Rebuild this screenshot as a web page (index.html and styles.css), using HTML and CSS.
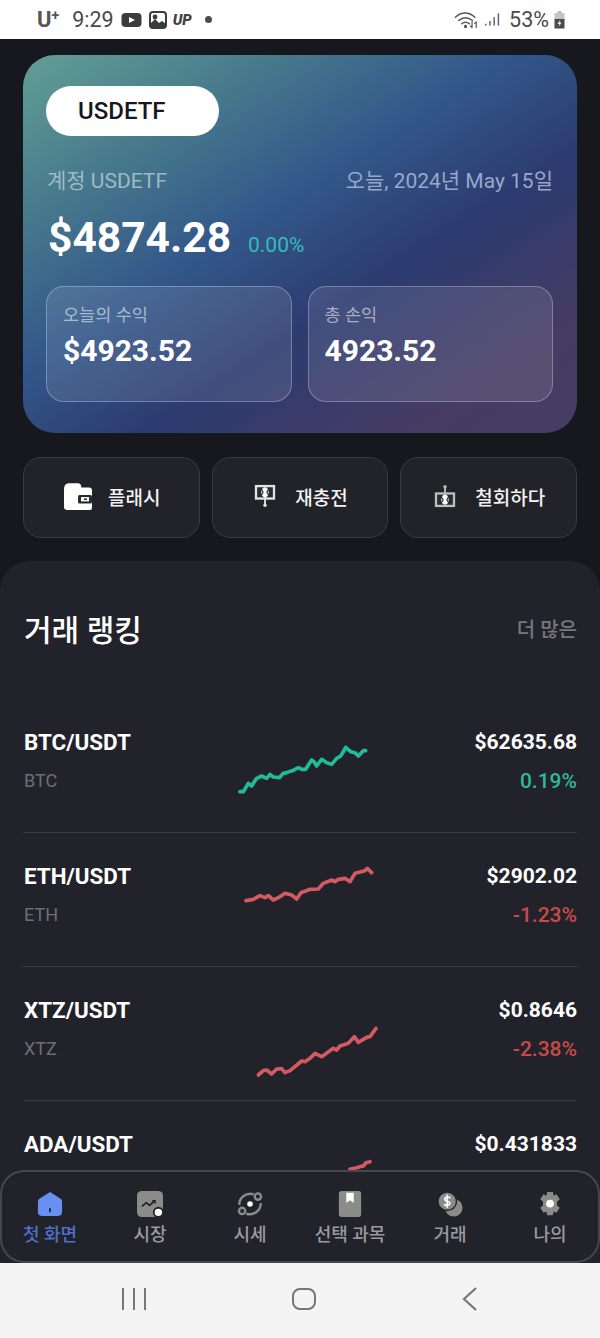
FILE: index.html
```html
<!DOCTYPE html>
<html lang="ko">
<head>
<meta charset="utf-8">
<title>USDETF</title>
<link rel="stylesheet" href="styles.css">
</head>
<body>
<div class="phone">
  <header class="status">
    <div class="status-left">
      <span class="carrier">U<sup>+</sup></span>
      <span class="clock">9:29</span>
      <svg class="si-yt" width="21" height="16" viewBox="0 0 21 16"><rect x="0.5" y="1" width="20" height="14" rx="4" fill="#3c3c3c"/><path d="M8 5l6 3-6 3z" fill="#fff"/></svg>
      <svg class="si-img" width="18" height="18" viewBox="0 0 18 18"><rect x="1" y="1" width="16" height="16" rx="3" fill="#fff" stroke="#3c3c3c" stroke-width="2"/><path d="M1 13l5-5 4 4 3-2 4 3v2a2 2 0 0 1-2 2H3a2 2 0 0 1-2-2z" fill="#3c3c3c"/><circle cx="6" cy="6" r="2.4" fill="#3c3c3c"/></svg>
      <span class="up">UP</span>
      <span class="dot"></span>
    </div>
    <div class="status-right">
      <svg class="si-wifi" width="25" height="20" viewBox="0 0 27 20" fill="none" stroke="#555" stroke-width="1.6" stroke-linecap="round"><path d="M1.500 7C8 1 16 1 22.500 7"/><path d="M5 10.500c5-4 10-4 15 0"/><path d="M8.500 14c3-2.200 5-2.200 8 0"/><circle cx="12.500" cy="17" r="1" fill="#555"/><path d="M19.500 12v6M17.800 16.500l1.700 1.700M24 18v-6M22.300 13.700l1.700-1.700" stroke-width="1.300"/></svg>
      <svg class="si-sig" width="15" height="14" viewBox="0 0 16 14" fill="#666"><rect x="0" y="11" width="1.600" height="2"/><rect x="4.500" y="8" width="1.600" height="5"/><rect x="9" y="4" width="1.600" height="9"/><rect x="13.500" y="0" width="1.600" height="13"/></svg>
      <span class="pct">53%</span>
      <svg width="13" height="18" viewBox="0 0 11 18"><rect x="3.500" y="0" width="4" height="2" fill="#bbb"/><rect x="0.500" y="2" width="10" height="7" fill="#c4c4c4"/><rect x="0.500" y="8" width="10" height="9.500" fill="#4a4a4a"/><path d="M6.500 8.500L3.500 13h2l-1 3 3-4.500h-2z" fill="#fff"/></svg>
    </div>
  </header>

  <main class="scroll">
    <section class="hero">
      <div class="pill">USDETF</div>
      <div class="hero-meta"><span>계정 USDETF</span><span class="hero-date">오늘, 2024년 May 15일</span></div>
      <div class="balance"><span class="amount">$4874.28</span><span class="change">0.00%</span></div>
      <div class="stats">
        <div class="stat"><div class="stat-label">오늘의 수익</div><div class="stat-value">$4923.52</div></div>
        <div class="stat"><div class="stat-label">총 손익</div><div class="stat-value">4923.52</div></div>
      </div>
    </section>

    <nav class="actions">
      <a class="action">
        <svg class="wallet" width="28" height="30" viewBox="0 0 28 28" preserveAspectRatio="none"><path d="M0 8q0-6 5-6h9q3 0 3.500 4H25q3 0 3 3V25q0 2-2 2H3q-3 0-3-3z" fill="#fff"/><rect x="14" y="13" width="14" height="8" rx="1.500" fill="#2a2b31"/><rect x="17" y="15" width="8" height="4" fill="#fff"/><rect x="20" y="16.300" width="3" height="1.400" fill="#2a2b31"/></svg>
        <span>플래시</span>
      </a>
      <a class="action wide">
        <svg width="22" height="24" viewBox="0 0 22 26"><rect x="0" y="1" width="22" height="16" fill="#e4e4e4"/><rect x="2.500" y="3.500" width="17" height="11" fill="#2a2b31"/><ellipse cx="11" cy="9" rx="4" ry="5.500" fill="#fff"/><path d="M7 5.500l2 3.500-2 3.500M15 5.500l-2 3.500 2 3.500" fill="none" stroke="#2a2b31" stroke-width="1.200"/><path d="M11 14v8" stroke="#e4e4e4" stroke-width="2"/><circle cx="11" cy="23" r="1.800" fill="#e4e4e4"/></svg>
        <span>재충전</span>
      </a>
      <a class="action wide">
        <svg width="22" height="24" viewBox="0 0 22 26"><rect x="0" y="9" width="22" height="16" fill="#bdbdbd"/><rect x="2.500" y="11.500" width="17" height="11" fill="#2a2b31"/><ellipse cx="11" cy="17" rx="4" ry="5.500" fill="#fff"/><path d="M7 13.500l2 3.500-2 3.500M15 13.500l-2 3.500 2 3.500" fill="none" stroke="#2a2b31" stroke-width="1.200"/><path d="M11 3v7" stroke="#bdbdbd" stroke-width="2"/><circle cx="11" cy="3" r="1.800" fill="#bdbdbd"/></svg>
        <span>철회하다</span>
      </a>
    </nav>

    <section class="panel">
      <div class="panel-head"><h2>거래 랭킹</h2><span class="more">더 많은</span></div>

      <div class="row">
        <div class="pair"><div class="sym">BTC/USDT</div><div class="coin">BTC</div></div>
        <svg class="spark up-line" viewBox="0 -93 510 402"><polyline points="60,185 70,185 78,172 85,160 95,168 103,155 110,145 125,138 140,145 150,133 160,141 178,143 190,130 200,128 210,124 218,122 225,118 235,113 245,118 257,118 265,105 275,90 282,95 290,108 305,88 320,98 335,103 350,85 362,78 370,65 377,52 392,65 405,68 415,78 430,62 437,62"/></svg>
        <div class="quote"><div class="price">$62635.68</div><div class="delta pos">0.19%</div></div>
      </div>
      <div class="row">
        <div class="pair"><div class="sym">ETH/USDT</div><div class="coin">ETH</div></div>
        <svg class="spark down-line" viewBox="0 309 510 402"><polyline points="78,512 100,508 120,497 135,503 145,497 160,510 175,503 195,490 215,495 230,507 243,488 270,478 295,477 310,460 335,450 345,455 355,448 375,445 390,455 405,430 435,422 442,415 455,428"/></svg>
        <div class="quote"><div class="price">$2902.02</div><div class="delta neg">-1.23%</div></div>
      </div>
      <div class="row">
        <div class="pair"><div class="sym">XTZ/USDT</div><div class="coin">XTZ</div></div>
        <svg class="spark down-line" viewBox="0 -99 510 402"><polyline points="115,225 130,212 140,210 155,222 170,207 185,206 195,218 210,212 245,183 255,185 270,175 285,160 305,170 340,145 350,150 360,138 385,130 403,110 415,127 440,112 450,110 468,85"/></svg>
        <div class="quote"><div class="price">$0.8646</div><div class="delta neg">-2.38%</div></div>
      </div>
      <div class="row">
        <div class="pair"><div class="sym">ADA/USDT</div></div>
        <svg class="spark down-line" viewBox="0 303 510 402"><polyline points="390,508 410,503 420,500 430,498 438,488 450,485"/></svg>
        <div class="quote"><div class="price">$0.431833</div></div>
      </div>
    </section>
  </main>

  <footer class="tabwrap">
    <div class="tabbar">
      <a class="tab active">
        <svg width="26" height="26" viewBox="0 0 28 28"><path d="M14 1L25 8q2 1 2 3.500V22q0 5-5 5H6q-5 0-5-5V11.500Q1 9 3 8z" fill="#6a8ff2"/><rect x="13" y="18" width="2" height="5" rx="1" fill="#1e2a4c"/></svg>
        <span>첫 화면</span>
      </a>
      <a class="tab">
        <svg width="26" height="26" viewBox="0 0 28 28"><rect x="0" y="0" width="28" height="28" rx="5" fill="#8b8b87"/><path d="M6 16l4-3.500 3.500 3 5-4.500" fill="none" stroke="#23242a" stroke-width="2" stroke-linecap="round" stroke-linejoin="round"/><path d="M16.500 10.500h3v3" fill="none" stroke="#23242a" stroke-width="1.500"/><circle cx="23" cy="23" r="5" fill="#fff" stroke="#23242a" stroke-width="2"/></svg>
        <span>시장</span>
      </a>
      <a class="tab">
        <svg width="26" height="26" viewBox="0 0 28 28" fill="none" stroke="#8b8b87" stroke-width="2.600"><path d="M18 3.500C10 1 2 7 2.500 15M10 24.500C18 27 26 21 25.500 13"/><circle cx="22.500" cy="6" r="3.400"/><circle cx="5.500" cy="21.500" r="3.400"/><circle cx="14" cy="14" r="3" fill="#fff" stroke="none"/></svg>
        <span>시세</span>
      </a>
      <a class="tab">
        <svg width="26" height="26" viewBox="0 0 28 28"><rect x="2" y="0" width="24" height="28" rx="3" fill="#8b8b87"/><path d="M10 2h8v11l-4-3-4 3z" fill="#fff"/></svg>
        <span>선택 과목</span>
      </a>
      <a class="tab">
        <svg width="26" height="26" viewBox="0 0 28 28"><circle cx="18" cy="18" r="9.500" fill="#8b8b87"/><circle cx="11" cy="11" r="10" fill="#8b8b87" stroke="#23242a" stroke-width="1.500"/><path d="M14.500 7.500q-3.500-2-5.800 0-1.500 2.500 2.300 3.500 4 1 2.500 3.500-2.500 2-6 0M11 4v14" fill="none" stroke="#fff" stroke-width="1.700"/></svg>
        <span>거래</span>
      </a>
      <a class="tab">
        <svg width="26" height="26" viewBox="0 0 28 28"><path d="M11 1h6l1 4 3-1.500 3.500 5.500-3 2.500v4l3 2.500-3.500 5.500-3-1.500-1 4h-6l-1-4-3 1.500L3.500 18l3-2.500v-4L3.500 9 7 3.500 10 5z" fill="#8b8b87"/><circle cx="14" cy="13.500" r="4.200" fill="#fff"/></svg>
        <span>나의</span>
      </a>
    </div>
  </footer>

  <div class="sysnav">
    <svg width="26" height="24" viewBox="0 0 26 24" fill="#77777a"><rect x="1" y="1" width="2" height="22"/><rect x="12" y="1" width="2" height="22"/><rect x="23" y="1" width="2" height="22"/></svg>
    <svg width="24" height="24" viewBox="0 0 24 24" fill="none" stroke="#77777a" stroke-width="2"><rect x="1" y="2" width="22" height="20" rx="7"/></svg>
    <svg width="18" height="26" viewBox="0 0 18 26" fill="none" stroke="#77777a" stroke-width="2.200"><path d="M15 2L3 13l12 11"/></svg>
  </div>
</div>
</body>
</html>
```
FILE: styles.css
```css
* { box-sizing: border-box; }
html, body { margin: 0; padding: 0; }
body { font-family: Roboto, "Noto Sans CJK KR", sans-serif; background: #17181d; color: #fff; }
.phone { width: 600px; height: 1338px; display: flex; flex-direction: column; overflow: hidden; background: #17181d; }

.status { height: 39px; flex: none; background: #fff; color: #4a4a4a; display: flex; justify-content: space-between; align-items: center; padding: 0 34px 0 37px; font-size: 21.500px; }
.status-left, .status-right { display: flex; align-items: center; }
.carrier { font-weight: 700; font-size: 22px; margin-right: 13px; color: #555; }
.carrier sup { font-size: 14px; line-height: 0; vertical-align: 7px; }
.clock { margin-right: 7px; }
.si-yt { margin-right: 7px; }
.si-img { margin-right: 6px; }
.up { font-weight: 900; font-style: italic; font-size: 15px; color: #444; }
.dot { width: 7px; height: 7px; border-radius: 50%; background: #4a4a4a; margin-left: 13px; }
.si-wifi { margin-right: 6px; }
.pct { margin: 0 4px 0 9px; }

.scroll { flex: none; height: 1131px; overflow: hidden; padding-top: 16px; }

.hero { margin: 0 23px; height: 378px; border-radius: 32px; padding: 31px 24px 0 23px; background: linear-gradient(147deg, #629f95 0%, #477a8c 22%, #33588a 42%, #2c3b70 62%, #463c64 85%, #483c62 100%); }
.pill { width: 173px; height: 50px; border-radius: 25px; background: #fff; color: #17181d; font-size: 24px; font-weight: 500; line-height: 50px; padding-left: 32px; }
.hero-meta { display: flex; justify-content: space-between; margin-top: 31px; padding-left: 1px; font-size: 21px; line-height: 28px; color: #9fb9c4; }
.hero-date { color: #98a8c6; }
.balance { display: flex; align-items: baseline; gap: 17px; margin-top: 17px; padding-left: 2px; }
.amount { font-size: 42.500px; font-weight: 700; line-height: 52px; }
.change { font-size: 21px; color: #36bcb4; }
.stats { display: flex; gap: 16px; margin-top: 22px; }
.stat { flex: 1; height: 116px; border: 1px solid rgba(255,255,255,.28); border-radius: 18px; background: rgba(255,255,255,.1); padding: 17px 16px 0 16px; }
.stat-label { font-size: 17.500px; line-height: 22px; color: rgba(255,255,255,.55); }
.stat-value { font-size: 30px; font-weight: 700; line-height: 36px; margin-top: 7px; }

.actions { display: flex; gap: 12px; margin: 24px 23px 0 23px; }
.action { flex: 1; height: 81px; border: 1px solid #3a3b41; border-radius: 18px; background: #222329; display: flex; align-items: center; justify-content: center; gap: 16px; padding: 0 0 3px 2px; font-size: 19px; font-weight: 500; color: #f2f2f2; }
.action.wide { gap: 19px; }

.panel { margin-top: 23px; min-height: 600px; background: #22232a; border-radius: 30px 30px 0 0; padding: 0 23px; }
.panel-head { display: flex; justify-content: space-between; align-items: center; height: 138px; padding: 0 0 4px 1px; }
.panel-head h2 { margin: 0; font-size: 30px; font-weight: 500; color: #fff; }
.more { font-size: 20px; font-weight: 500; color: #77787e; }

.row { display: grid; grid-template-columns: 197px 170px 1fr; height: 134px; border-bottom: 1px solid #3a3b40; }
.pair, .quote { padding-top: 26px; }
.pair { padding-left: 1px; }
.quote { text-align: right; }
.sym { font-size: 22.400px; font-weight: 700; line-height: 34px; color: #fff; }
.price { font-size: 21px; font-weight: 700; line-height: 34px; color: #fff; }
.coin, .delta { margin-top: 5px; line-height: 34px; }
.coin { font-size: 18px; color: #6d6e74; }
.delta { font-size: 21px; font-weight: 500; }
.pos { color: #2fb79c; }
.neg { color: #c8494b; }
.spark { width: 170px; height: 134px; fill: none; stroke-width: 11; stroke-linejoin: round; stroke-linecap: round; }
.up-line { stroke: #21bc95; }
.down-line { stroke: #d45a62; }

.tabwrap { flex: none; height: 93px; background: #22232a; }
.tabbar { height: 93px; box-shadow: inset 0 0 0 2px #46474c; border-radius: 24px; display: grid; grid-template-columns: repeat(6, 1fr); padding: 21px 0 0 0; }
.tab { display: flex; flex-direction: column; align-items: center; color: #9a9a9f; font-size: 18px; font-weight: 500; line-height: 24px; gap: 6px; }
.tab.active { color: #4f6fca; }

.sysnav { flex: none; height: 75px; background: #f4f4f4; display: flex; align-items: center; gap: 145px; padding: 0 0 3px 121px; }
```
